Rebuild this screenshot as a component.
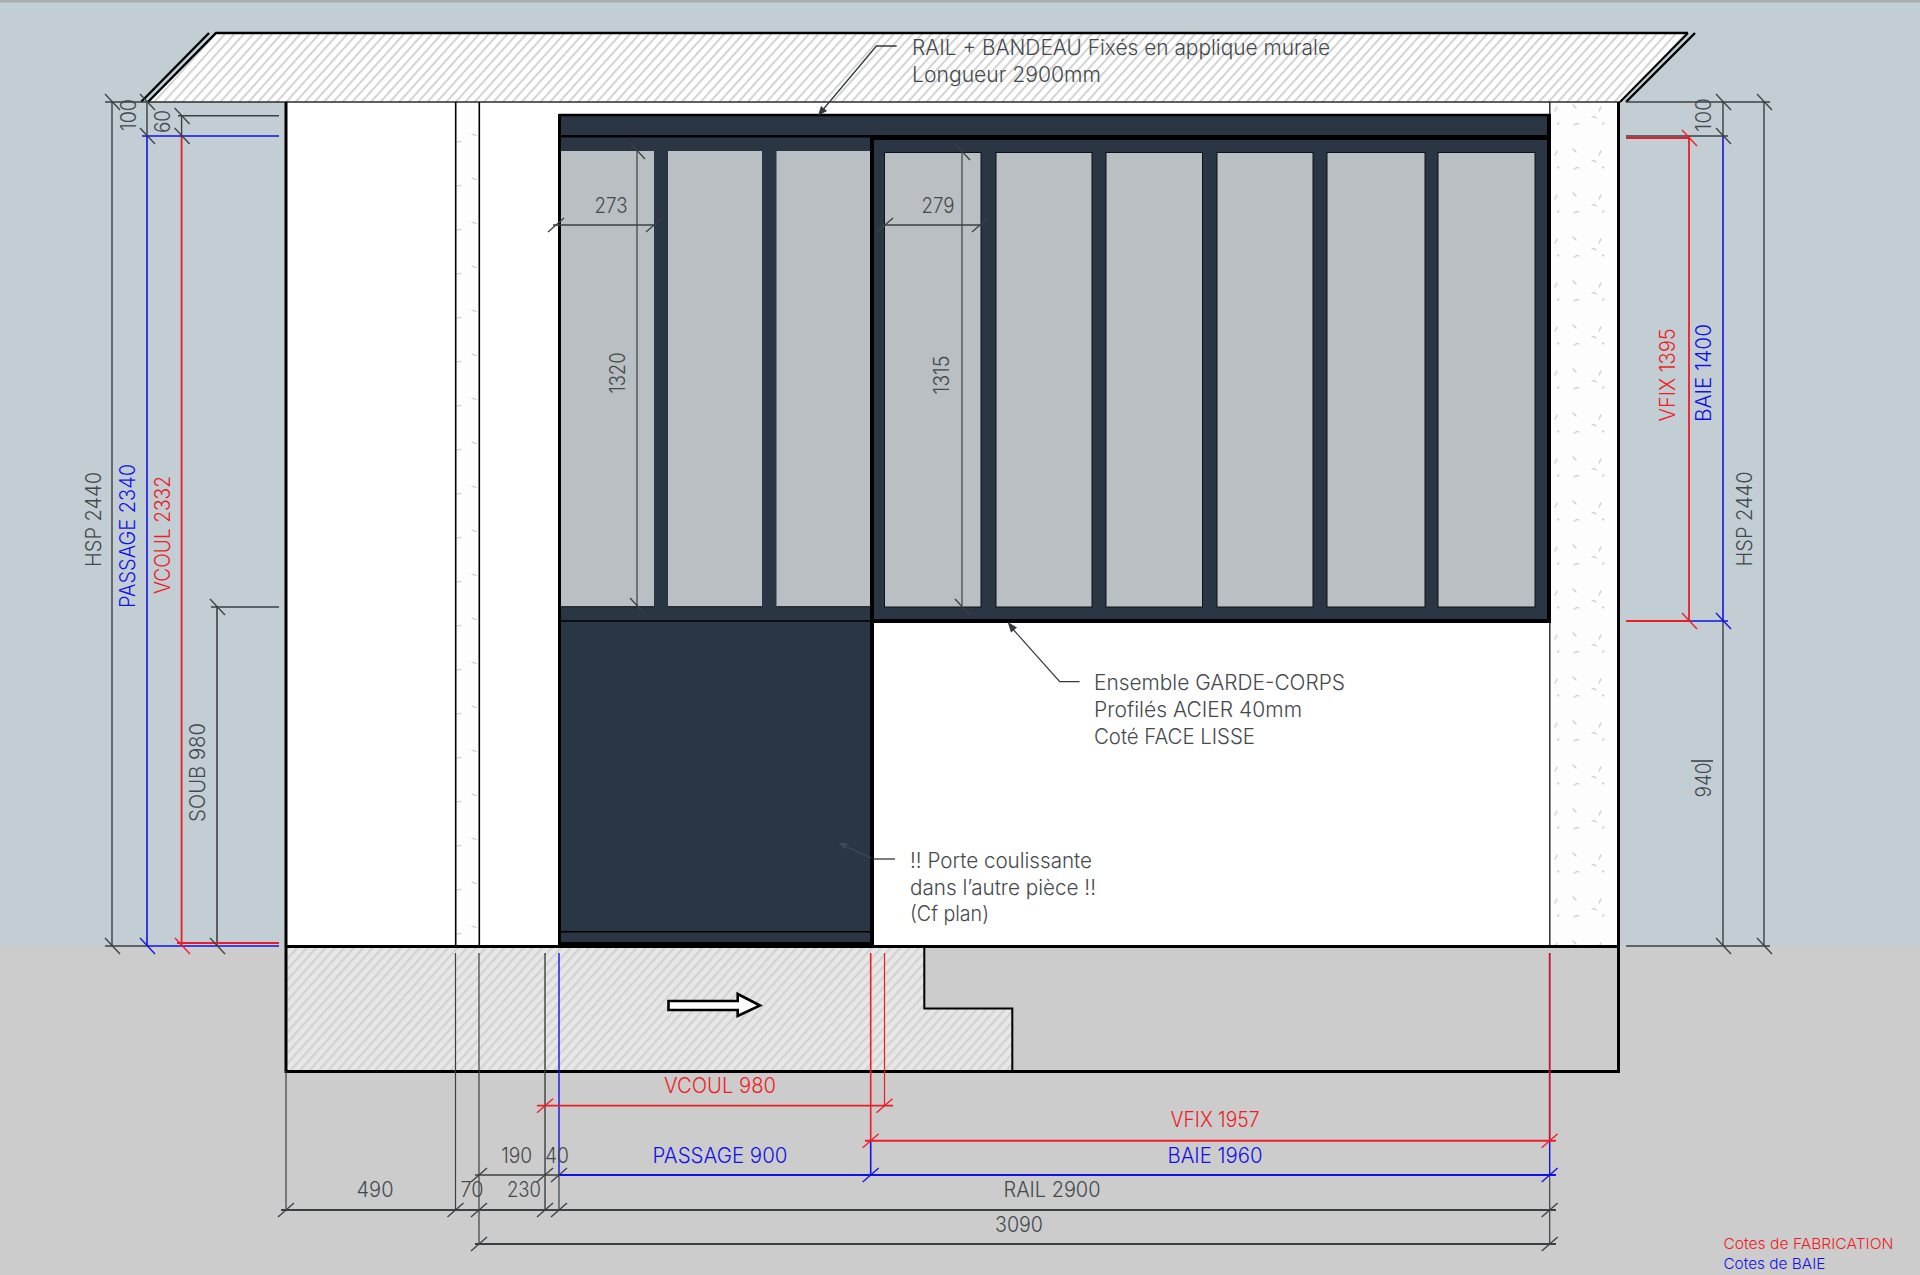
const DARK = "#3b4043"
const BLUE = "#1212e6"
const RED = "#ee1c25"
const BLACK = "#000000"
const STEEL = "#2a3644"

type Seg = [number, number, number, number, string, number?]

// x1, y1, x2, y2, colour, width
const dimLines: Seg[] = [
    // left side verticals
    [112, 102, 112, 946, DARK, 1.4],
    [147, 102, 147, 136, DARK, 1.4],
    [147, 136, 147, 946, BLUE, 1.6],
    [181.6, 116, 181.6, 136, DARK, 1.4],
    [181.6, 136, 181.6, 946, RED, 1.8],
    [217, 607, 217, 946, DARK, 1.6],
    [105, 102, 148, 102, DARK, 1.4],
    [178, 115.7, 279, 115.7, DARK, 1.4],
    [142, 136, 279, 136, BLUE, 1.6],
    [211, 607, 279, 607, DARK, 1.4],
    [105, 946, 147, 946, DARK, 1.4],
    [147, 946, 279, 946, BLUE, 1.6],
    [177, 943, 279, 943, RED, 2],
    // right side verticals
    [1764, 102, 1764, 946, DARK, 1.4],
    [1723, 102, 1723, 136, DARK, 1.4],
    [1723, 136, 1723, 621, BLUE, 1.6],
    [1723, 621, 1723, 946, DARK, 1.4],
    [1689, 136, 1689, 621, RED, 1.8],
    [1626, 102, 1770, 102, DARK, 1.4],
    [1626, 136, 1728, 136, DARK, 1.6],
    [1626, 138, 1689, 138, RED, 2],
    [1626, 621, 1689, 621, RED, 1.8],
    [1689, 621, 1728, 621, BLUE, 1.6],
    [1626, 946, 1770, 946, DARK, 1.4],
    [1691, 761, 1713, 761, DARK, 1.6],
    // bottom verticals
    [286, 1071, 286, 1210, DARK, 1.2],
    [455.5, 953, 455.5, 1210, DARK, 1.2],
    [479, 953, 479, 1244, DARK, 1.2],
    [545, 953, 545, 1210, DARK, 1.4],
    [559, 953, 559, 1175, BLUE, 1.4],
    [559, 1175, 559, 1210, DARK, 1.2],
    [870.7, 953, 870.7, 1140.7, RED, 1.6],
    [870.7, 1140.7, 870.7, 1175, BLUE, 1.6],
    [884.5, 953, 884.5, 1105.7, RED, 1.2],
    [1549.7, 953, 1549.7, 1140.7, "#c4103f", 1.8],
    [1549.7, 1140.7, 1549.7, 1175, BLUE, 1.4],
    [1549.7, 1175, 1549.7, 1244, DARK, 1.2],
    // bottom horizontals
    [537, 1105.7, 893, 1105.7, RED, 1.8],
    [865, 1140.7, 1556, 1140.7, RED, 2],
    [475, 1175, 559, 1175, DARK, 1.6],
    [559, 1175, 1556, 1175, BLUE, 2],
    [281, 1210, 1556, 1210, DARK, 1.8],
    [475, 1244, 1556, 1244, DARK, 1.8],
    // inside the glazing
    [553, 225, 655, 225, DARK, 1.4],
    [637, 151, 637, 606, DARK, 1.2],
    [883, 225, 982, 225, DARK, 1.4],
    [962, 152, 962, 607, DARK, 1.2],
]

// tick leaning like "\" on vertical dimensions
const backTicks: [number, number, string][] = [
    [112, 102, DARK], [147, 102, DARK], [147, 136, DARK], [181.6, 116, DARK], [181.6, 136, DARK],
    [112, 946, DARK], [147, 946, BLUE], [182, 946, RED], [217, 946, DARK], [217, 607, DARK],
    [1723, 102, DARK], [1764, 102, DARK], [1723, 136, DARK], [1689, 138, RED], [1689, 621, RED],
    [1723, 621, BLUE], [1723, 946, DARK], [1764, 946, DARK],
    [637, 151, DARK], [637, 606, DARK], [962, 152, DARK], [962, 607, DARK],
]

// tick leaning like "/" on horizontal dimensions
const slashTicks: [number, number, string][] = [
    [545, 1105.7, RED], [884.5, 1105.7, RED], [870.7, 1140.7, RED], [1549.7, 1140.7, RED],
    [479, 1175, DARK], [545, 1175, DARK], [559, 1175, DARK], [870.7, 1175, BLUE], [1549.7, 1175, BLUE],
    [286, 1210, DARK], [455.5, 1210, DARK], [479, 1210, DARK], [545, 1210, DARK], [559, 1210, DARK],
    [1549.7, 1210, DARK], [479, 1244, DARK], [1549.7, 1244, DARK],
    [556, 225, DARK], [654, 225, DARK], [885, 225, DARK], [980, 225, DARK],
]

const leftGlass = [[561, 654], [668, 762], [776.5, 870]]
const rightGlass = [[884.5, 981], [996, 1092], [1106, 1202.5], [1217, 1313], [1327, 1425], [1438, 1535]]

// x, baseline, text width, text
const flatDark: [number, number, number, string][] = [
    [611, 213, 33, "273"],
    [938, 213, 33, "279"],
    [516.7, 1163, 31, "190"],
    [557, 1163, 24, "40"],
    [375, 1197, 37, "490"],
    [472, 1197, 23, "70"],
    [524, 1197, 34, "230"],
    [1052, 1197, 97, "RAIL 2900"],
    [1019, 1232, 48, "3090"],
]

// baseline x, centre y, text width, text, colour class
const upright: [number, number, number, string, string][] = [
    [135.5, 115, 32, "100", "fill-[#44494d]"],
    [170, 121.5, 23, "60", "fill-[#44494d]"],
    [100.5, 519.5, 95, "HSP 2440", "fill-[#44494d]"],
    [135, 536, 144, "PASSAGE 2340", "fill-[#1212e6]"],
    [170, 535, 118, "VCOUL 2332", "fill-[#ee1c25]"],
    [205, 772.5, 99, "SOUB 980", "fill-[#44494d]"],
    [625, 373, 41, "1320", "fill-[#44494d]"],
    [949, 375, 39, "1315", "fill-[#44494d]"],
    [1675, 375, 93, "VFIX 1395", "fill-[#ee1c25]"],
    [1711, 373, 98, "BAIE 1400", "fill-[#1212e6]"],
    [1711, 115, 34, "100", "fill-[#44494d]"],
    [1711, 780, 35, "940", "fill-[#44494d]"],
    [1752, 519, 95, "HSP 2440", "fill-[#44494d]"],
]

// x, baseline, text width, text
const notes: [number, number, number, string][] = [
    [912, 55, 418, "RAIL + BANDEAU Fixés en applique murale"],
    [912, 82, 189, "Longueur 2900mm"],
    [1094, 690, 251, "Ensemble GARDE-CORPS"],
    [1094, 717, 208, "Profilés ACIER 40mm"],
    [1094, 744, 161, "Coté FACE LISSE"],
    [910, 868, 182, "!! Porte coulissante"],
    [910, 895, 186, "dans l’autre pièce !!"],
    [910, 921, 79, "(Cf plan)"],
]

function Specks() {
    return (
        <g fill="none" stroke="#cbcbcb" strokeWidth="1.2" strokeLinecap="round">
            <path d="M7 19 l-2 4 M51 19 l-2 4 M23 17 l3 3 M42 29 q2 -1 4 1 M24 37 q2 -2 5 -1" />
            <path d="M8 35.5 h.5 M53 35.5 h.5" strokeWidth="1.8" />
        </g>
    )
}

export default function App() {
    return (
        <div className="h-[1275px] w-[1920px] overflow-hidden bg-[#cccccc]">
            <svg
                width="1920"
                height="1275"
                viewBox="0 0 1920 1275"
                className="block font-['Inter',sans-serif] font-light"
            >
                <defs>
                    <pattern id="hatchTop" width="7" height="7" patternUnits="userSpaceOnUse" patternTransform="rotate(42)">
                        <rect width="7" height="7" fill="#ffffff" />
                        <rect width="1.8" height="7" fill="#cfcfcf" />
                    </pattern>
                    <pattern id="hatchFloor" width="7" height="7" patternUnits="userSpaceOnUse" patternTransform="rotate(42)">
                        <rect width="7" height="7" fill="#e7e7e7" />
                        <rect width="2.4" height="7" fill="#d3d3d3" />
                    </pattern>
                    <pattern id="concrete" x="1550" y="572" width="67" height="44" patternUnits="userSpaceOnUse">
                        <rect width="67" height="44" fill="#fdfdfd" />
                        <Specks />
                    </pattern>
                    <pattern id="postSpecks" x="455" y="-2" width="25" height="44" patternUnits="userSpaceOnUse">
                        <rect width="25" height="44" fill="#fdfdfd" />
                        <path d="M17 4 l4 1.5 M2 12 l4 -.6" stroke="#cbcbcb" strokeWidth="1.2" strokeLinecap="round" />
                    </pattern>
                </defs>

                {/* wall and floor */}
                <rect width="1920" height="946" fill="#c2ced3" />
                <rect width="1920" height="2.5" fill="#a9adb0" />
                <rect y="946" width="1920" height="329" fill="#cccccc" />

                {/* bandeau above the opening */}
                <polygon points="216,33 1688,33 1620,102 148,102" fill="url(#hatchTop)" />
                <path d="M1688 33 H216 L148 102" fill="none" stroke={BLACK} strokeWidth="2.4" />
                <path d="M209 33 L141 102" stroke={BLACK} strokeWidth="2.4" />
                <path d="M1688 33 L1620 102" stroke={BLACK} strokeWidth="2" />
                <path d="M1695 33 L1626 102" stroke={BLACK} strokeWidth="2.4" />

                {/* opening */}
                <rect x="286" y="102" width="1332" height="844" fill="#ffffff" />
                <rect x="456" y="103" width="23" height="843" fill="url(#postSpecks)" />
                <rect x="1550" y="103" width="67" height="843" fill="url(#concrete)" />
                <path d="M148 102 H1620" stroke="#2b2b2b" strokeWidth="1.6" />
                <path d="M455.7 102 V946 M479.3 102 V946" stroke={BLACK} strokeWidth="1.6" />
                <path d="M1549.8 102 V946" stroke="#222222" strokeWidth="1.4" />

                {/* floor block */}
                <polygon points="286,946 924.3,946 924.3,1008.5 1012.3,1008.5 1012.3,1071 286,1071" fill="url(#hatchFloor)" />
                <path d="M924.3 946 V1008.5 H1012.3 V1071" fill="none" stroke={BLACK} strokeWidth="2" />
                <path d="M286 102 V1071.5 H1618.5 V102" fill="none" stroke={BLACK} strokeWidth="3" />
                <path d="M286 946.5 H1618.5" stroke={BLACK} strokeWidth="3" />

                {/* frame */}
                <rect x="559" y="115" width="992" height="24" fill={STEEL} />
                <rect x="559" y="137" width="312" height="808" fill={STEEL} />
                <rect x="871" y="137" width="680" height="485" fill={STEEL} />
                <path d="M559 115 H1551" stroke={BLACK} strokeWidth="2.4" />
                <path d="M559.5 114 V947" stroke={BLACK} strokeWidth="3" />
                <path d="M559 136.3 H871" stroke={BLACK} strokeWidth="2.6" />
                <rect x="870" y="135" width="681" height="5" fill={BLACK} />
                <rect x="870" y="135" width="4" height="812" fill={BLACK} />
                <rect x="1547" y="114" width="4" height="509" fill={BLACK} />
                <rect x="870" y="619" width="681" height="4" fill={BLACK} />
                <path d="M559 621 H871" stroke={BLACK} strokeWidth="1.6" />
                <path d="M559 931.7 H871" stroke={BLACK} strokeWidth="1.6" />
                <rect x="558" y="942" width="315" height="6" fill={BLACK} />
                {leftGlass.map(([a, b]) => (
                    <rect key={a} x={a} y="151" width={b - a} height="455.7" fill="#b9bfc2" />
                ))}
                {leftGlass.map(([a, b]) => (
                    <path key={a} d={`M${a} 606.7 H${b}`} stroke="#11161c" strokeWidth="1" />
                ))}
                {rightGlass.map(([a, b]) => (
                    <rect key={a} x={a} y="152.5" width={b - a} height="454.5" fill="#b9bfc2" stroke="#0d1218" strokeWidth="1" />
                ))}

                {/* dimension lines */}
                {dimLines.map(([x1, y1, x2, y2, color, w], i) => (
                    <line key={i} x1={x1} y1={y1} x2={x2} y2={y2} stroke={color} strokeWidth={w ?? 1.4} />
                ))}
                {backTicks.map(([x, y, color], i) => (
                    <line key={i} x1={x - 7} y1={y - 8} x2={x + 8} y2={y + 8} stroke={color} strokeWidth="1.3" />
                ))}
                {slashTicks.map(([x, y, color], i) => (
                    <line key={i} x1={x - 8} y1={y + 7} x2={x + 8} y2={y - 7} stroke={color} strokeWidth="1.3" />
                ))}

                {/* sliding direction */}
                <polygon
                    points="668.5,1001 737.7,1001 737.7,994 760,1005.5 737.7,1016 737.7,1010 668.5,1010"
                    fill="#ffffff"
                    stroke={BLACK}
                    strokeWidth="2.6"
                />

                {/* leaders */}
                <path d="M896.7 46 H876.4 L821 112" fill="none" stroke="#33383b" strokeWidth="1.3" />
                <polygon points="818,115.7 821,106 827,111" fill="#33383b" />
                <path d="M1079.6 681.7 H1059.7 L1011 627" fill="none" stroke="#33383b" strokeWidth="1.3" />
                <polygon points="1007.7,622 1017,627.5 1011,632.5" fill="#33383b" />
                <path d="M895 859 H873" stroke="#33383b" strokeWidth="1.3" />
                <path d="M871 858 L842 844.5" stroke="#3f4a55" strokeWidth="1.3" />
                <polygon points="838,842.7 848,843 845,849" fill="#3f4a55" />

                {/* text */}
                {flatDark.map(([x, y, w, t]) => (
                    <text key={t} x={x} y={y} textLength={w} lengthAdjust="spacingAndGlyphs" textAnchor="middle" className="fill-[#44494d] text-[21px]">
                        {t}
                    </text>
                ))}
                {upright.map(([x, y, w, t, cls]) => (
                    <text
                        key={t + x}
                        transform={`translate(${x} ${y}) rotate(-90)`}
                        textLength={w}
                        lengthAdjust="spacingAndGlyphs"
                        textAnchor="middle"
                        className={`${cls} text-[21px]`}
                    >
                        {t}
                    </text>
                ))}
                {notes.map(([x, y, w, t]) => (
                    <text key={t} x={x} y={y} textLength={w} lengthAdjust="spacingAndGlyphs" className="fill-[#44494d] text-[21px]">
                        {t}
                    </text>
                ))}
                <text x="720" y="1092.7" textLength="112" lengthAdjust="spacingAndGlyphs" textAnchor="middle" className="fill-[#ee1c25] text-[21px]">VCOUL 980</text>
                <text x="720" y="1163" textLength="135" lengthAdjust="spacingAndGlyphs" textAnchor="middle" className="fill-[#1212e6] text-[21px]">PASSAGE 900</text>
                <text x="1215" y="1127" textLength="89" lengthAdjust="spacingAndGlyphs" textAnchor="middle" className="fill-[#ee1c25] text-[21px]">VFIX 1957</text>
                <text x="1215" y="1162.7" textLength="95" lengthAdjust="spacingAndGlyphs" textAnchor="middle" className="fill-[#1212e6] text-[21px]">BAIE 1960</text>
                <text x="1723.4" y="1249" textLength="170" lengthAdjust="spacingAndGlyphs" className="fill-[#ee1c25] text-[15px]">Cotes de FABRICATION</text>
                <text x="1723.4" y="1269" textLength="102" lengthAdjust="spacingAndGlyphs" className="fill-[#1212e6] text-[15px]">Cotes de BAIE</text>
            </svg>
        </div>
    )
}
